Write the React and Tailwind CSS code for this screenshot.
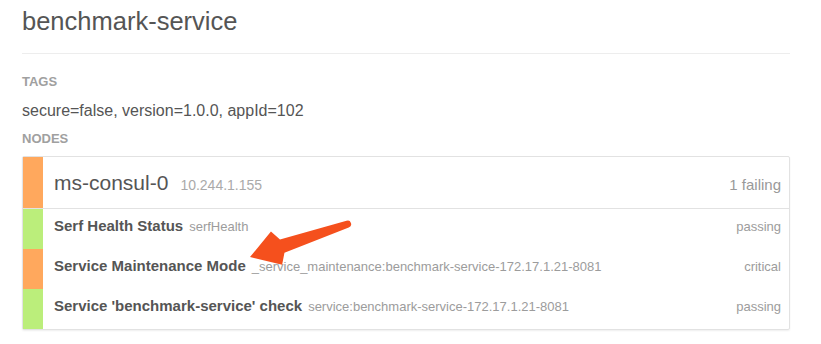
import React from "react";

const rows = [
  { name: "Serf Health Status", id: "serfHealth", status: "passing", color: "bg-[#bbee7b]" },
  { name: "Service Maintenance Mode", id: "_service_maintenance:benchmark-service-172.17.1.21-8081", status: "critical", color: "bg-[#ffa85d]" },
  { name: "Service 'benchmark-service' check", id: "service:benchmark-service-172.17.1.21-8081", status: "passing", color: "bg-[#bbee7b]" },
];

export default function App() {
  return (
    <div className="relative w-[821px] h-[344px] bg-white overflow-hidden font-['Liberation_Sans',Arial,sans-serif]">
      <div className="ml-[22px] w-[768px] pt-[6px]">
        <h1 className="text-[25.5px] leading-[30px] text-[#555] pb-[17px] border-b border-[#ededed]">
          benchmark-service
        </h1>
        <div className="mt-[20px] text-[13px] leading-[16px] font-bold text-[#a0a0a0]">TAGS</div>
        <div className="mt-[11px] text-[16px] leading-[20px] text-[#555]">secure=false, version=1.0.0, appId=102</div>
        <div className="mt-[10px] text-[13px] leading-[16px] font-bold text-[#a0a0a0]">NODES</div>
        <div className="mt-[9px] border border-[#e2e2e2] rounded-[2px] shadow-[0_1px_2px_rgba(0,0,0,0.07)]">
          <div className="flex h-[52px] border-b border-[#e2e2e2]">
            <div className="w-[20px] bg-[#ffa85d]" />
            <div className="flex-1 flex items-center pl-[11px] pr-[8px]">
              <div className="flex-1 flex items-baseline justify-between">
                <div className="flex items-baseline gap-[12px]">
                  <span className="text-[21px] leading-[24px] text-[#555]">ms-consul-0</span>
                  <span className="text-[14px] leading-[20px] text-[#aaa]">10.244.1.155</span>
                </div>
                <span className="text-[15px] leading-[20px] text-[#999]">1 failing</span>
              </div>
            </div>
          </div>
          {rows.map((r) => (
            <div key={r.name} className="flex h-[40px]">
              <div className={`w-[20px] ${r.color}`} />
              <div className="flex-1 flex items-baseline justify-between pl-[11px] pr-[8px] pt-[7px]">
                <div className="flex items-baseline">
                  <span className="text-[15px] leading-[20px] font-bold text-[#555]">{r.name}</span>
                  <span className="ml-[6px] text-[13px] leading-[20px] text-[#9c9c9c]">{r.id}</span>
                </div>
                <span className="text-[13px] leading-[20px] text-[#9c9c9c]">{r.status}</span>
              </div>
            </div>
          ))}
        </div>
      </div>
      <svg className="absolute left-0 top-0" width="821" height="344" viewBox="0 0 821 344">
        <g transform="translate(250 257) rotate(-18.6)">
          <path
            d="M0 0 L28 -17.5 L34 -7 L103 -3.5 A3.5 3.5 0 0 1 103 3.5 L34 7 L28 17.5 Z"
            fill="#f5501d"
          />
        </g>
      </svg>
    </div>
  );
}
